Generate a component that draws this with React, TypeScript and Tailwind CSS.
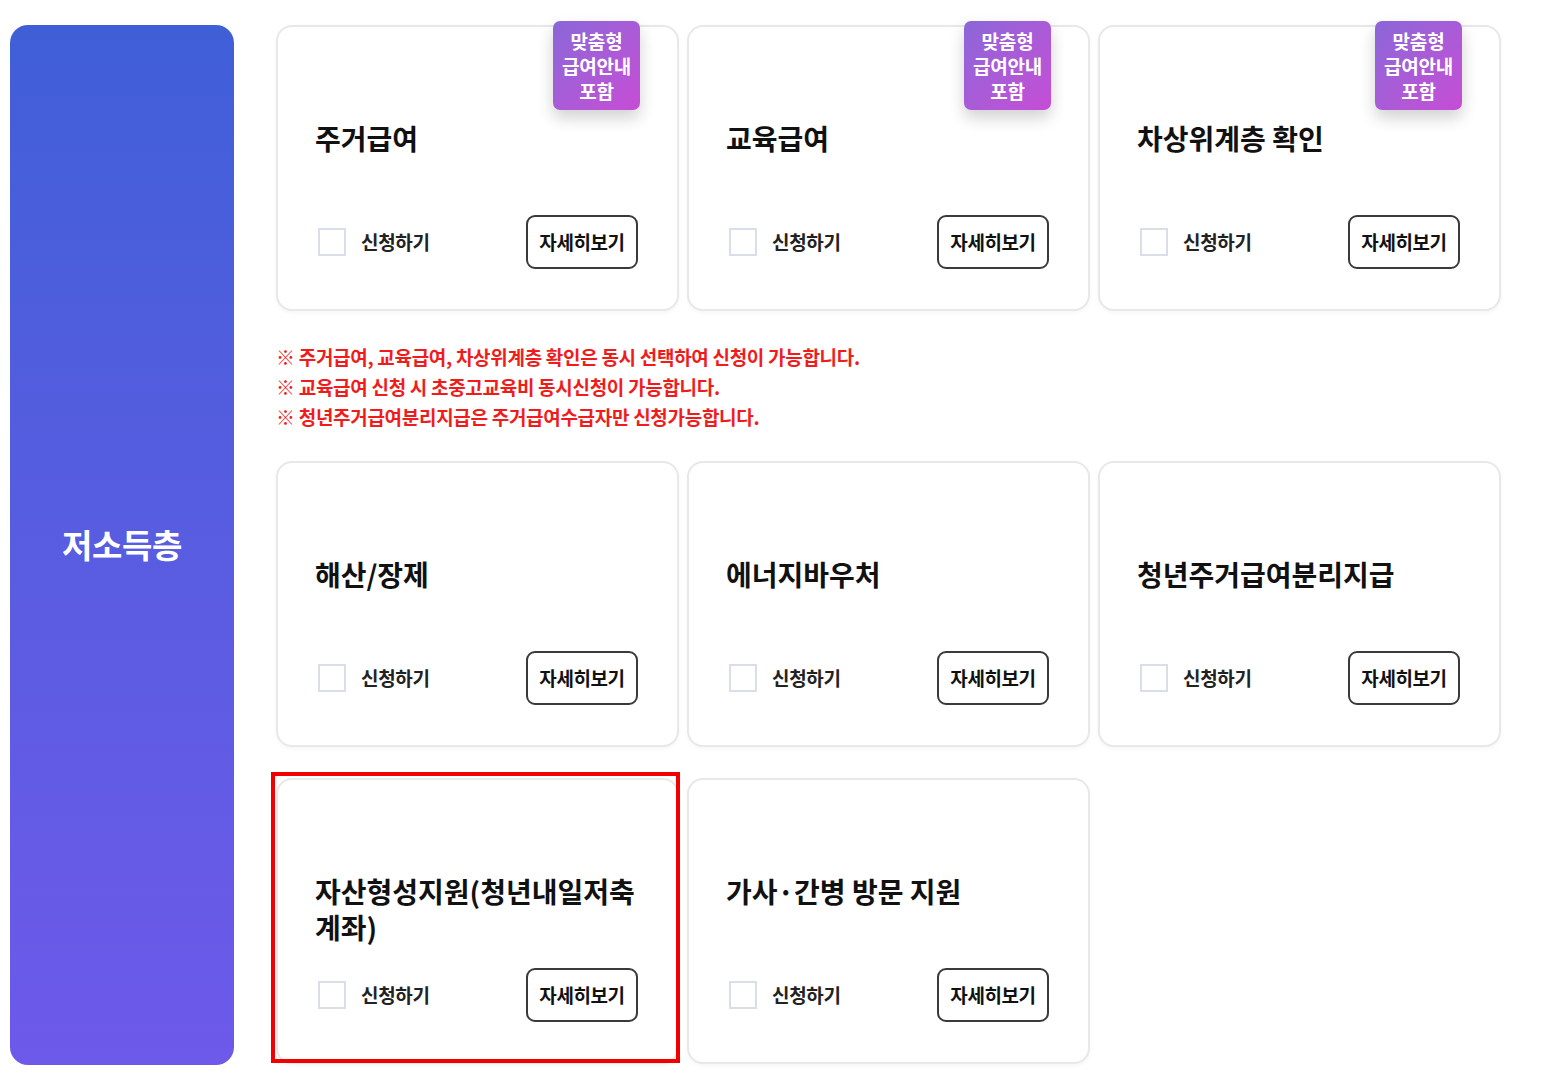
import React from "react";

const FONT = { fontFamily: '"Noto Sans CJK KR", "Noto Sans", sans-serif' };

type CardProps = {
  title: React.ReactNode;
  badge?: boolean;
  highlight?: boolean;
};

function Card({ title, badge, highlight }: CardProps) {
  return (
    <div className="relative h-[286px] w-[403px] rounded-[16px] border-2 border-[#e8e8e8] bg-white shadow-[0_2px_4px_rgba(0,0,0,0.04)] flex flex-col pl-[37px] pr-[39px] pt-[93px] pb-[40px]">
      {badge && (
        <div className="absolute right-[37px] top-[-6px] flex h-[89px] w-[87px] flex-col items-center justify-center rounded-[7px] bg-gradient-to-br from-[#8a66d8] to-[#c64cd6] text-[19px] font-semibold leading-[25px] tracking-[-0.2px] text-white shadow-[0_8px_16px_rgba(0,0,0,0.18)]">
          <span>맞춤형</span>
          <span>급여안내</span>
          <span>포함</span>
        </div>
      )}
      <div className="text-[28px] font-bold leading-[36px] text-[#111]">{title}</div>
      <div className="mt-auto flex items-center justify-between">
        <label className="ml-[3px] flex items-center gap-[15px]">
          <span className="block h-[28px] w-[28px] border-2 border-[#d9deea] bg-white" />
          <span className="text-[19px] font-semibold tracking-[-0.3px] text-[#222]">신청하기</span>
        </label>
        <button className="h-[54px] w-[112px] rounded-[9px] border-2 border-[#3a3a3a] bg-white text-[19px] font-semibold tracking-[-0.4px] text-[#111]">
          자세히보기
        </button>
      </div>
      {highlight && (
        <div className="pointer-events-none absolute left-[-7px] top-[-8px] h-[291px] w-[409px] border-[4px] border-[#f20000]" />
      )}
    </div>
  );
}

export default function App() {
  return (
    <div className="h-[1075px] w-[1560px] bg-white" style={FONT}>
      <div className="flex pl-[10px] pt-[25px] gap-[42px]">
        <div className="flex h-[1040px] w-[224px] items-center justify-center rounded-[18px] bg-gradient-to-b from-[#3f5fd7] to-[#6d59ea]">
          <span className="text-[33px] font-bold tracking-[-0.3px] text-white">저소득층</span>
        </div>
        <div className="flex flex-col">
          <div className="grid grid-cols-[403px_403px_403px] gap-x-[8px]">
            <Card title="주거급여" badge />
            <Card title="교육급여" badge />
            <Card title="차상위계층 확인" badge />
          </div>
          <div className="pt-[31px] pb-[29px] text-[19px] font-semibold leading-[30px] tracking-[-0.3px] text-[#f01c1c]">
            <p>※ 주거급여, 교육급여, 차상위계층 확인은 동시 선택하여 신청이 가능합니다.</p>
            <p>※ 교육급여 신청 시 초중고교육비 동시신청이 가능합니다.</p>
            <p>※ 청년주거급여분리지급은 주거급여수급자만 신청가능합니다.</p>
          </div>
          <div className="grid grid-cols-[403px_403px_403px] gap-x-[8px] gap-y-[31px]">
            <Card title="해산/장제" />
            <Card title="에너지바우처" />
            <Card title="청년주거급여분리지급" />
            <Card
              title={
                <>
                  자산형성지원(청년내일저축
                  <br />
                  계좌)
                </>
              }
              highlight
            />
            <Card title="가사·간병 방문 지원" />
          </div>
        </div>
      </div>
    </div>
  );
}
